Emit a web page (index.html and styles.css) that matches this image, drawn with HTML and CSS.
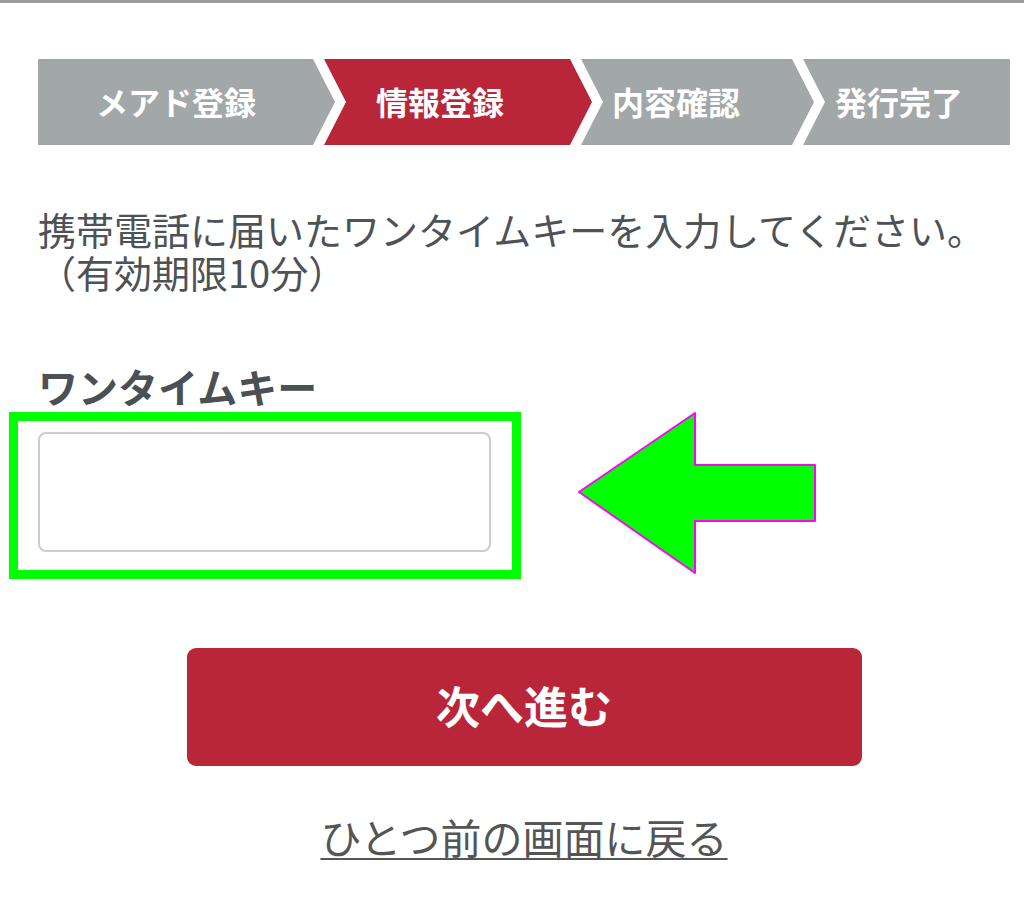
FILE: index.html
```html
<!DOCTYPE html>
<html lang="ja">
<head>
    <meta charset="UTF-8">
    <meta name="viewport" content="width=device-width, initial-scale=1.0">
    <title>ワンタイムキー入力</title>
    <link rel="stylesheet" href="styles.css">
</head>
<body>
    <div class="page">
        <!-- Progress steps -->
        <ol class="steps">
            <li class="step step-first">メアド登録</li>
            <li class="step step-current">情報登録</li>
            <li class="step step-third">内容確認</li>
            <li class="step step-last">発行完了</li>
        </ol>

        <div class="lead">
            <p>携帯電話に届いたワンタイムキーを入力してください。</p>
            <p>（有効期限10分）</p>
        </div>

        <form class="otp-form" action="#">
            <label class="field-label" for="otpInput">ワンタイムキー</label>
            <div class="field">
                <input type="text" id="otpInput" name="otp" class="otp-input" autocomplete="one-time-code">
                <!-- annotation: highlight box + arrow -->
                <span class="mark-box"></span>
                <svg class="mark-arrow" width="240" height="164" viewBox="0 0 240 164">
                    <polygon points="2,81 118,2 118,54 238,54 238,110 118,110 118,162" fill="#00ff00" stroke="#ff00ff" stroke-width="2" stroke-linejoin="round"/>
                </svg>
            </div>

            <button type="submit" class="next-btn">次へ進む</button>
            <a href="#" class="back-link">ひとつ前の画面に戻る</a>
        </form>
    </div>
</body>
</html>
```

FILE: styles.css
```css
/* General Reset */
* {
    margin: 0;
    padding: 0;
    box-sizing: border-box;
}

body {
    background: #ffffff;
    border-top: 3px solid #9b9b9b;
    font-family: "Noto Sans CJK JP", "Noto Sans", sans-serif;
    color: #4d5257;
}

.page {
    padding: 56px 14px 40px 38px;
}

/* Progress steps */
.steps {
    list-style: none;
    display: flex;
    height: 86px;
}

.step {
    display: flex;
    align-items: center;
    height: 100%;
    margin-left: -11px;
    padding-bottom: 3px;
    background-color: #a2a7a7;
    color: #ffffff;
    font-size: 32px;
    font-weight: 700;
    line-height: 1;
    clip-path: polygon(0 0, calc(100% - 22px) 0, 100% 50%, calc(100% - 22px) 100%, 0 100%, 22px 50%);
}

.step-first {
    width: 297px;
    margin-left: 0;
    padding-left: 58px;
    clip-path: polygon(0 0, calc(100% - 22px) 0, 100% 50%, calc(100% - 22px) 100%, 0 100%);
}

.step-current {
    width: 268px;
    padding-left: 52px;
    background-color: #b92639;
}

.step-third {
    width: 233px;
    padding-left: 31px;
}

.step-last {
    flex: 1;
    padding-left: 32px;
    clip-path: polygon(0 0, 100% 0, 100% 100%, 0 100%, 22px 50%);
}

/* Lead text */
.lead {
    margin-top: 62px;
    font-size: 38px;
    line-height: 43px;
    color: #4d5257;
}

/* Form */
.otp-form {
    display: flex;
    flex-direction: column;
}

.field-label {
    margin-top: 70px;
    font-size: 40px;
    font-weight: 700;
    line-height: 46px;
    color: #4b5055;
}

.field {
    position: relative;
    width: 453px;
    margin-top: 23px;
}

.otp-input {
    display: block;
    width: 100%;
    height: 120px;
    padding: 0 20px;
    border: 2px solid #cdcdcd;
    border-radius: 8px;
    font-size: 36px;
    font-family: inherit;
    background: #ffffff;
}

.mark-box {
    position: absolute;
    left: -29px;
    top: -20px;
    width: 512px;
    height: 167px;
    border: 9px solid #00ff00;
    pointer-events: none;
}

.mark-arrow {
    position: absolute;
    left: 539px;
    top: -21px;
    pointer-events: none;
}

.next-btn {
    align-self: center;
    width: 675px;
    height: 118px;
    margin-top: 96px;
    padding-bottom: 4px;
    background-color: #b92639;
    color: #ffffff;
    border: none;
    border-radius: 9px;
    font-family: inherit;
    font-size: 44px;
    font-weight: 700;
    cursor: pointer;
}

.back-link {
    align-self: center;
    margin-top: 45px;
    font-size: 41px;
    line-height: 50px;
    color: #555555;
    text-decoration: underline;
    text-decoration-thickness: 2px;
    text-underline-offset: 4px;
}
```
